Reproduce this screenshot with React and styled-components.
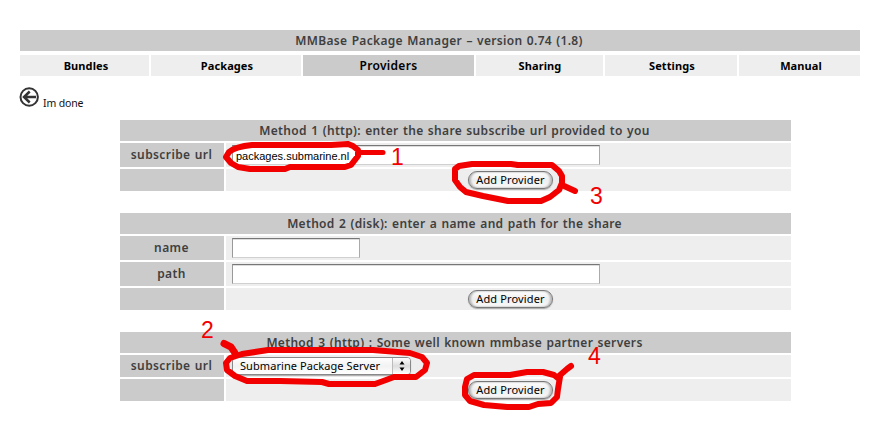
import React from "react";
import styled, { createGlobalStyle } from "styled-components";

const GlobalStyle = createGlobalStyle`
  * { box-sizing: border-box; }
  body { margin: 0; background: #fff; }
`;

const Page = styled.main`
  position: relative;
  width: 881px;
  height: 430px;
  overflow: hidden;
  padding: 30px 21px 0 20px;
  font-family: "Noto Sans", "Open Sans", sans-serif;
  font-size: 12px;
  color: #3f3f3f;
`;

const Heading = styled.h1`
  margin: 0;
  height: 21px;
  padding-right: 2px;
  line-height: 22px;
  background: #cbcbcb;
  text-align: center;
  font-size: 12px;
  font-weight: 600;
  letter-spacing: 0.32px;
  word-spacing: 0.9px;
  white-space: nowrap;
`;

const Tabs = styled.nav`
  display: grid;
  grid-template-columns: 129px 150px 171px 127px 132px 121px;
  column-gap: 2px;
  margin-top: 4px;
`;

const Tab = styled.a`
  height: 21px;
  line-height: 21px;
  padding-left: ${(p) => p.$shift || "0"};
  text-align: center;
  color: #000;
  font-weight: ${(p) => (p.$active ? "600" : "700")};
  font-size: ${(p) => (p.$active ? "12px" : "11px")};
  letter-spacing: ${(p) => (p.$active ? "0.3px" : "0.1px")};
  background: ${(p) => (p.$active ? "#cbcbcb" : "#eeeeee")};
`;

const Back = styled.a`
  display: flex;
  gap: 3px;
  height: 44px;
  padding-top: 11px;
  color: #111;
  font-size: 10.5px;
  letter-spacing: -0.15px;
  white-space: nowrap;
  svg { margin-left: -1px; flex: none; }
  span { padding-top: 8px; line-height: 16px; }
`;

const Method = styled.section`
  width: 671px;
  margin: 0 0 22px 100px;
`;

const Row = styled.div`
  display: grid;
  grid-template-columns: 104px 565px;
  gap: 2px;
  height: ${(p) => (p.$tall ? "24px" : "22px")};
  margin-top: 2px;
`;

const Label = styled.div`
  display: flex;
  align-items: center;
  justify-content: center;
  padding: 0 1px 1px 0;
  background: #cbcbcb;
  font-weight: 600;
  letter-spacing: 0.4px;
  word-spacing: 0.7px;
`;

const Field = styled.div`
  display: flex;
  align-items: center;
  justify-content: ${(p) => (p.$center ? "center" : "flex-start")};
  padding: 0 0 0 ${(p) => (p.$center ? "4px" : "6px")};
  background: #eeeeee;
`;

const Input = styled.input`
  width: ${(p) => p.$width};
  height: 20px;
  padding: 2px 3px 0;
  border: 1px solid;
  border-color: #777 #aaa #d0d0d0 #999;
  border-radius: 0;
  outline: 0;
  background: #fff;
  box-shadow: inset 0 1px #ddd;
  color: #000;
  font: 11px "Liberation Sans", sans-serif;
  letter-spacing: 0;
`;

const Button = styled.button`
  width: 85px;
  height: 18px;
  padding: 0 0 1px;
  border: 1px solid #777;
  border-radius: 9px;
  background: linear-gradient(#fff, #eee 50%, #fafafa);
  box-shadow: inset 2px 0 2px #bbb, inset -2px 0 2px #bbb, 0 1px 1px #aaa;
  color: #000;
  font: 11px/14px "Noto Sans", sans-serif;
  letter-spacing: 0.15px;
`;

const Select = styled.button`
  display: flex;
  justify-content: space-between;
  align-items: center;
  width: 179px;
  height: 18px;
  padding: 0 0 0 7px;
  border: 1px solid #888;
  border-radius: 4px;
  background: linear-gradient(#fff, #f2f2f2 50%, #fff);
  box-shadow: 0 1px 1px #aaa;
  color: #000;
  font: 11px/16px "Noto Sans", sans-serif;
  letter-spacing: 0.07px;
  white-space: nowrap;
`;

const Arrows = styled.span`
  display: flex;
  align-items: center;
  justify-content: center;
  width: 18px;
  height: 16px;
  border-left: 1px solid #bbb;
  border-radius: 0 3px 3px 0;
  background: linear-gradient(#fff, #ddd 50%, #fff);
`;

const Marks = styled.svg`
  position: absolute;
  inset: 0;
  pointer-events: none;
  fill: none;
  stroke: #f20000;
  stroke-width: 6;
  stroke-linecap: round;
  stroke-linejoin: round;
  text {
    fill: #f20000;
    stroke: none;
    font: 23px "Liberation Sans", sans-serif;
  }
`;

const AddRow = () => (
  <Row>
    <Label />
    <Field $center><Button>Add Provider</Button></Field>
  </Row>
);

export default function App() {
  return (
    <>
      <GlobalStyle />
      <Page>
        <Heading>MMBase Package Manager – version 0.74 (1.8)</Heading>
        <Tabs>
          <Tab $shift="3px">Bundles</Tab>
          <Tab $shift="2px">Packages</Tab>
          <Tab $active>Providers</Tab>
          <Tab $shift="1px">Sharing</Tab>
          <Tab $shift="2px">Settings</Tab>
          <Tab $shift="3px">Manual</Tab>
        </Tabs>
        <Back>
          <svg width="21" height="21" viewBox="0 0 21 21" fill="none" stroke="#333">
            <circle cx="10.2" cy="10" r="8.7" strokeWidth="2" />
            <path d="M17 10H5M10.7 4.5L5 10l5.7 5.5" strokeWidth="2.5" />
          </svg>
          <span>Im done</span>
        </Back>

        <Method>
          <Heading as="h2">Method 1 (http): enter the share subscribe url provided to you</Heading>
          <Row $tall>
            <Label>subscribe url</Label>
            <Field><Input $width="368px" defaultValue="packages.submarine.nl" /></Field>
          </Row>
          <AddRow />
        </Method>

        <Method>
          <Heading as="h2">Method 2 (disk): enter a name and path for the share</Heading>
          <Row $tall>
            <Label>name</Label>
            <Field><Input $width="128px" /></Field>
          </Row>
          <Row $tall>
            <Label>path</Label>
            <Field><Input $width="368px" /></Field>
          </Row>
          <AddRow />
        </Method>

        <Method>
          <Heading as="h2">Method 3 (http) : Some well known mmbase partner servers</Heading>
          <Row>
            <Label>subscribe url</Label>
            <Field>
              <Select>
                Submarine Package Server
                <Arrows>
                  <svg width="6" height="10" viewBox="0 0 6 10">
                    <path d="M3 0L5.5 3.5H.5zM3 10L.5 6.5h5z" fill="#000" />
                  </svg>
                </Arrows>
              </Select>
            </Field>
          </Row>
          <AddRow />
        </Method>

        <Marks width="881" height="430">
          <path d="M348 144L331 145H252C241 146 234 148 229 152L226 157L231 163L238 167L250 169H285L290 167H345L351 165L358 156V150L353 146L348 144" />
          <path d="M358 152.5H383" strokeWidth="5" />
          <path d="M518 165L511 164H472L459 166L455 169V180L460 187L466 192L483 196L508 201H541L550 197L559 190L562 183V176L559 171L552 165L517 165M562 185L575 191" />
          <path d="M224 343.5L231 347L235 353" strokeWidth="7" />
          <path d="M419 356L410 353L373 350L268 350L242 354L230 358L226 363L227 370L235 376L247 381H280L322 382L329 384H375L386 380L394 377H416L425 370L427 363L422 357L410 353" />
          <path d="M559 379L554 375L543 372H527L510 375H474L467 379L465 387V395L470 401L484 405L507 407H529L538 404L551 403L557 397L558 389L560 377M559 376L567 369L571 366" />
          <text x="391" y="165">1</text>
          <text x="201" y="338">2</text>
          <text x="590" y="204">3</text>
          <text x="588" y="364">4</text>
        </Marks>
      </Page>
    </>
  );
}
